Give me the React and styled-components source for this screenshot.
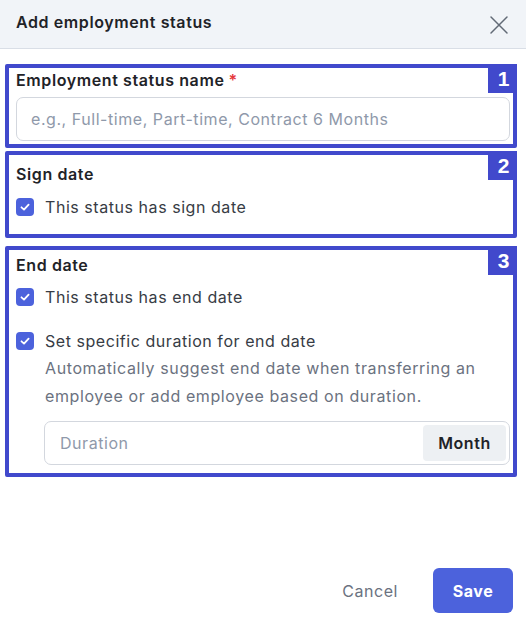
import React from "react";
import styled, { createGlobalStyle } from "styled-components";

const Global = createGlobalStyle`
  html, body { margin: 0; padding: 0; background: #ffffff; }
  body { font-family: Inter, "Noto Sans", sans-serif; letter-spacing: 0.55px; }
  input, button { letter-spacing: 0.55px; }
  * { box-sizing: border-box; }
`;

const Modal = styled.div`
  width: 526px;
  height: 631px;
  display: flex;
  flex-direction: column;
  background: #ffffff;
  overflow: hidden;
`;

const Header = styled.div`
  height: 49px;
  display: flex;
  align-items: center;
  justify-content: space-between;
  padding: 0 16px 4px 16px;
  background: #f1f4f8;
  border-bottom: 1px solid #d9dee6;
`;

const Title = styled.h2`
  margin: 0;
  font-size: 16px;
  font-weight: 600;
  color: #1f2328;
  letter-spacing: 0.6px;
`;

const CloseButton = styled.button`
  width: 24px;
  height: 24px;
  padding: 0;
  border: none;
  background: none;
  display: flex;
  align-items: center;
  justify-content: center;
  margin-right: -1px;
  margin-top: 6px;
  cursor: pointer;
`;

const Body = styled.div`
  padding: 19px 16px 0 16px;
  display: flex;
  flex-direction: column;
`;

const Field = styled.section`
  position: relative;
  display: flex;
  flex-direction: column;
  margin-top: ${(p) => p.$mt || 0}px;
`;

const Label = styled.div`
  font-size: 16px;
  line-height: 24px;
  font-weight: 600;
  color: #1f2328;
  letter-spacing: 0.6px;
  margin-bottom: ${(p) => p.$mb || 0}px;
`;

const Required = styled.span`
  color: #e5383b;
  margin-left: 4px;
`;

const TextInput = styled.input`
  height: 44px;
  width: 100%;
  border: 1px solid #d3d7de;
  border-radius: 7px;
  padding: 0 14px;
  font-family: Inter, "Noto Sans", sans-serif;
  font-size: 16px;
  color: #1f2328;
  outline: none;
  &::placeholder { color: #8f99aa; }
`;

const CheckRow = styled.label`
  display: flex;
  align-items: center;
  gap: 11px;
  height: 24px;
  margin-top: ${(p) => p.$mt || 0}px;
  font-size: 16px;
  color: #373c45;
`;

const Box = styled.span`
  width: 18px;
  height: 18px;
  border-radius: 4px;
  background: #4c62dc;
  display: flex;
  align-items: center;
  justify-content: center;
  flex-shrink: 0;
`;

const Description = styled.p`
  margin: 1px 0 0 29px;
  font-size: 16px;
  line-height: 28px;
  letter-spacing: 0.6px;
  color: #6b7280;
`;

const Group = styled.div`
  margin: 11px 0 0 28px;
  height: 44px;
  display: flex;
  align-items: center;
  border: 1px solid #d3d7de;
  border-radius: 7px;
  padding: 3px;
`;

const GroupInput = styled.input`
  flex: 1;
  min-width: 0;
  height: 100%;
  border: none;
  outline: none;
  padding: 0 12px;
  font-family: Inter, "Noto Sans", sans-serif;
  font-size: 16px;
  background: transparent;
  &::placeholder { color: #8f99aa; }
`;

const Addon = styled.span`
  width: 83px;
  height: 36px;
  border-radius: 4px;
  background: #edf0f3;
  display: flex;
  align-items: center;
  justify-content: center;
  font-size: 16px;
  font-weight: 600;
  color: #1f2328;
`;

const Footer = styled.div`
  margin-top: auto;
  display: flex;
  justify-content: flex-end;
  align-items: center;
  gap: 17px;
  padding: 0 13px 18px 16px;
`;

const CancelButton = styled.button`
  border: none;
  background: none;
  font-family: Inter, "Noto Sans", sans-serif;
  font-size: 16px;
  color: #6b7280;
  height: 45px;
  padding: 0 18px;
  cursor: pointer;
`;

const SaveButton = styled.button`
  border: none;
  background: #4c62dc;
  color: #ffffff;
  font-family: Inter, "Noto Sans", sans-serif;
  font-size: 16px;
  font-weight: 700;
  width: 80px;
  height: 45px;
  border-radius: 6px;
  cursor: pointer;
`;

const Annotation = styled.div`
  position: absolute;
  top: ${(p) => p.$t}px;
  bottom: ${(p) => p.$b}px;
  left: -11px;
  right: -7px;
  border: 4px solid #4149cc;
  border-radius: 2px;
  pointer-events: none;
`;

const Badge = styled.span`
  position: absolute;
  top: -4px;
  right: -4px;
  width: 29px;
  height: 29px;
  background: #4149cc;
  color: #ffffff;
  font-family: "Liberation Sans", Arial, sans-serif;
  font-weight: 700;
  font-size: 21px;
  letter-spacing: 0;
  display: flex;
  align-items: center;
  justify-content: center;
  padding-left: 2px;
`;

const Check = () => (
  <Box>
    <svg width="12" height="12" viewBox="0 0 12 12" fill="none">
      <path d="M2.5 6.3 L5 8.6 L9.6 3.6" stroke="#fff" strokeWidth="1.8" strokeLinecap="round" strokeLinejoin="round" />
    </svg>
  </Box>
);

export default function App() {
  return (
    <>
      <Global />
      <Modal>
        <Header>
          <Title>Add employment status</Title>
          <CloseButton aria-label="Close">
            <svg width="20" height="20" viewBox="0 0 20 20" fill="none">
              <path d="M2 2 L18 18 M18 2 L2 18" stroke="#626a76" strokeWidth="1.5" strokeLinecap="round" />
            </svg>
          </CloseButton>
        </Header>
        <Body>
          <Field>
            <Label $mb={5}>
              Employment status name<Required>*</Required>
            </Label>
            <TextInput placeholder="e.g., Full-time, Part-time, Contract 6 Months" />
            <Annotation $t={-4} $b={-7}>
              <Badge>1</Badge>
            </Annotation>
          </Field>
          <Field $mt={21}>
            <Label>Sign date</Label>
            <CheckRow $mt={9}>
              <Check />
              This status has sign date
            </CheckRow>
            <Annotation $t={-11} $b={-19}>
              <Badge>2</Badge>
            </Annotation>
          </Field>
          <Field $mt={34}>
            <Label>End date</Label>
            <CheckRow $mt={8}>
              <Check />
              This status has end date
            </CheckRow>
            <CheckRow $mt={20}>
              <Check />
              Set specific duration for end date
            </CheckRow>
            <Description>
              Automatically suggest end date when transferring an employee or add employee based on duration.
            </Description>
            <Group>
              <GroupInput placeholder="Duration" />
              <Addon>Month</Addon>
            </Group>
            <Annotation $t={-7} $b={-12}>
              <Badge>3</Badge>
            </Annotation>
          </Field>
        </Body>
        <Footer>
          <CancelButton>Cancel</CancelButton>
          <SaveButton>Save</SaveButton>
        </Footer>
      </Modal>
    </>
  );
}
